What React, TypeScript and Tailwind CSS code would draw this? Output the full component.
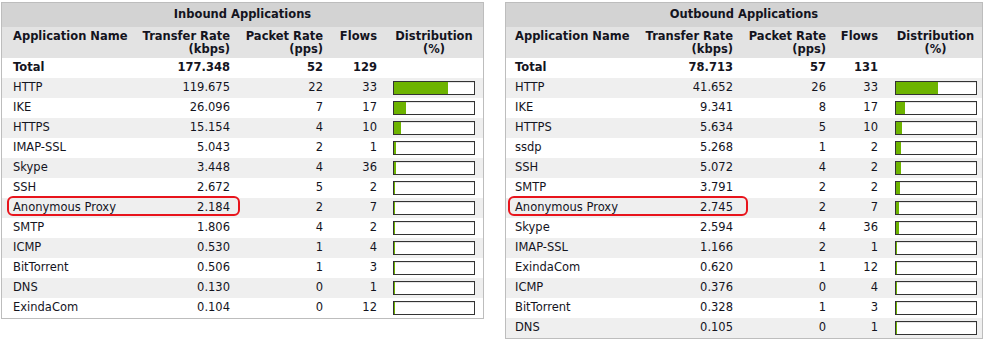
type Row = { name: string; rate: number; pps: number; flows: number }

const inbound: Row[] = [
  { name: 'HTTP', rate: 119.675, pps: 22, flows: 33 },
  { name: 'IKE', rate: 26.096, pps: 7, flows: 17 },
  { name: 'HTTPS', rate: 15.154, pps: 4, flows: 10 },
  { name: 'IMAP-SSL', rate: 5.043, pps: 2, flows: 1 },
  { name: 'Skype', rate: 3.448, pps: 4, flows: 36 },
  { name: 'SSH', rate: 2.672, pps: 5, flows: 2 },
  { name: 'Anonymous Proxy', rate: 2.184, pps: 2, flows: 7 },
  { name: 'SMTP', rate: 1.806, pps: 4, flows: 2 },
  { name: 'ICMP', rate: 0.53, pps: 1, flows: 4 },
  { name: 'BitTorrent', rate: 0.506, pps: 1, flows: 3 },
  { name: 'DNS', rate: 0.13, pps: 0, flows: 1 },
  { name: 'ExindaCom', rate: 0.104, pps: 0, flows: 12 },
]

const outbound: Row[] = [
  { name: 'HTTP', rate: 41.652, pps: 26, flows: 33 },
  { name: 'IKE', rate: 9.341, pps: 8, flows: 17 },
  { name: 'HTTPS', rate: 5.634, pps: 5, flows: 10 },
  { name: 'ssdp', rate: 5.268, pps: 1, flows: 2 },
  { name: 'SSH', rate: 5.072, pps: 4, flows: 2 },
  { name: 'SMTP', rate: 3.791, pps: 2, flows: 2 },
  { name: 'Anonymous Proxy', rate: 2.745, pps: 2, flows: 7 },
  { name: 'Skype', rate: 2.594, pps: 4, flows: 36 },
  { name: 'IMAP-SSL', rate: 1.166, pps: 2, flows: 1 },
  { name: 'ExindaCom', rate: 0.62, pps: 1, flows: 12 },
  { name: 'ICMP', rate: 0.376, pps: 0, flows: 4 },
  { name: 'BitTorrent', rate: 0.328, pps: 1, flows: 3 },
  { name: 'DNS', rate: 0.105, pps: 0, flows: 1 },
]

const Bar = ({ pct }: { pct: number }) => {
  const w = Math.max(1, Math.round(pct * 80))
  return (
    <div className="w-[82px] h-[14px] border border-[#333] bg-white flex">
      <div className="h-full bg-[#6db300]" style={{ width: w }} />
      <div className="flex-1 h-full border-t border-[#e4e4e4]" />
    </div>
  )
}

interface TableProps {
  title: string
  total: { rate: number; pps: number; flows: number }
  rows: Row[]
  cols: string
  width: string
  namePad: string
  barPad: string
  marker: string
}

const AppTable = ({ title, total, rows, cols, width, namePad, barPad, marker }: TableProps) => {
  return (
    <div className={`${width} border border-[#bdbdbd] text-[11.5px] text-[#14141e]`}>
      <div className="h-[24px] bg-[#d3d3d3] flex items-center justify-center font-bold">{title}</div>
      <div className={`grid ${cols} bg-[#e3e3e3] h-[31px] pt-[3px] font-bold leading-[13px] whitespace-nowrap`}>
        <div className={namePad}>Application Name</div>
        <div className="text-right">Transfer Rate<br />(kbps)</div>
        <div className="text-right">Packet Rate<br />(pps)</div>
        <div className="text-right">Flows</div>
        <div className={`${barPad} text-center w-[98px]`}>Distribution<br />(%)</div>
      </div>
      <div className={`grid ${cols} h-[20px] items-center font-bold bg-white`}>
        <div className={namePad}>Total</div>
        <div className="text-right">{total.rate.toFixed(3)}</div>
        <div className="text-right">{total.pps}</div>
        <div className="text-right">{total.flows}</div>
        <div />
      </div>
      {rows.map((r, i) => (
        <div
          key={r.name}
          className={`relative grid ${cols} h-[20px] items-center ${i % 2 === 0 ? 'bg-[#efefef]' : 'bg-white'}`}
        >
          <div className={namePad}>{r.name}</div>
          <div className="text-right">{r.rate.toFixed(3)}</div>
          <div className="text-right">{r.pps}</div>
          <div className="text-right">{r.flows}</div>
          <div className={barPad}>
            <Bar pct={r.rate / total.rate} />
          </div>
          {r.name === 'Anonymous Proxy' && (
            <div className={`absolute top-[-2px] h-[20px] border-2 border-[#e8141c] rounded-[6px] ${marker}`} />
          )}
        </div>
      ))}
    </div>
  )
}

export default function App() {
  return (
    <div
      className="w-[988px] h-[340px] bg-white flex items-start gap-[21px] pl-[1px] pt-[2px]"
      style={{ fontFamily: '"DejaVu Sans", Verdana, sans-serif' }}
    >
      <AppTable
        title="Inbound Applications"
        total={{ rate: 177.348, pps: 52, flows: 129 }}
        rows={inbound}
        cols="grid-cols-[130px_98px_93px_54px_1fr]"
        width="w-[483px]"
        namePad="pl-[11px]"
        barPad="pl-[16px]"
        marker="left-[5px] w-[233px]"
      />
      <AppTable
        title="Outbound Applications"
        total={{ rate: 78.713, pps: 57, flows: 131 }}
        rows={outbound}
        cols="grid-cols-[127px_100px_93px_52px_1fr]"
        width="w-[478px]"
        namePad="pl-[9px]"
        barPad="pl-[17px]"
        marker="left-[2px] w-[240px]"
      />
    </div>
  )
}
